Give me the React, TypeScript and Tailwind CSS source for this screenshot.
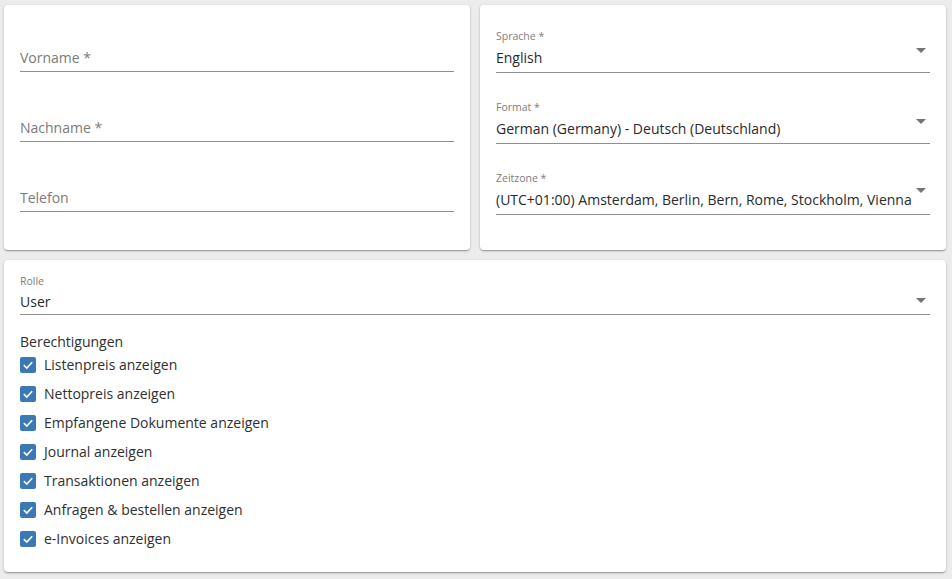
import React from "react";

const font = { fontFamily: '"Open Sans", "Liberation Sans", sans-serif' };

interface FieldProps {
  label?: string;
  value?: string;
  placeholder?: string;
  select?: boolean;
  arrowTop?: number;
  tight?: boolean;
}

const ArrowDown: React.FC<{ top: number }> = ({ top }) => (
  <svg
    className="absolute right-[-3px] w-6 h-6 text-[#757575]"
    style={{ top }}
    viewBox="0 0 24 24"
    fill="currentColor"
  >
    <path d="M7 10l5 5 5-5z" />
  </svg>
);

const Field: React.FC<FieldProps> = ({ label, value, placeholder, select, arrowTop = 10, tight }) => (
  <div className="relative">
    <div className="h-4 text-[10.5px] leading-4 text-[#7d7d7d]">{label}</div>
    <div
      className={
        "border-b border-[#8f8f8f] pt-[4px] pr-4 text-sm leading-5 whitespace-nowrap overflow-hidden " +
        (tight ? "pb-[3px]" : "pb-[4px]")
      }
    >
      {value ? (
        <span className="text-[#2a2a2a]">{value}</span>
      ) : (
        <span className="text-[#7a7a7a]">{placeholder}</span>
      )}
    </div>
    {select && <ArrowDown top={arrowTop} />}
  </div>
);

const Check: React.FC<{ label: string }> = ({ label }) => (
  <div className="h-[29px] flex items-center gap-2">
    <span className="w-4 h-4 rounded-[2px] bg-[#3b78b6] flex items-center justify-center">
      <svg viewBox="0 0 16 16" className="w-4 h-4">
        <polyline points="3.8,8.2 6.8,11 12.2,5.2" fill="none" stroke="#fff" strokeWidth="1.6" />
      </svg>
    </span>
    <span className="text-sm leading-5 text-[#2f2f2f]">{label}</span>
  </div>
);

const permissions = [
  "Listenpreis anzeigen",
  "Nettopreis anzeigen",
  "Empfangene Dokumente anzeigen",
  "Journal anzeigen",
  "Transaktionen anzeigen",
  "Anfragen & bestellen anzeigen",
  "e-Invoices anzeigen",
];

const card = "bg-white rounded-[4px] shadow-[0_1px_3px_rgba(0,0,0,0.2),0_1px_1px_rgba(0,0,0,0.14),0_2px_1px_-1px_rgba(0,0,0,0.12)]";

export default function App() {
  return (
    <div className="w-[952px] h-[579px] bg-[#ececec] pl-[4px] pr-[6px] pt-[5px] overflow-hidden" style={font}>
      <div className="grid grid-cols-2 gap-[10px]">
        {/* personal data */}
        <div className={card + " h-[245px] px-4 pt-[23px] flex flex-col gap-[26px]"}>
          <Field placeholder="Vorname *" tight />
          <Field placeholder="Nachname *" tight />
          <Field placeholder="Telefon" tight />
        </div>

        {/* locale settings */}
        <div className={card + " h-[245px] px-4 pt-[23px] flex flex-col gap-[26px]"}>
          <Field label="Sprache *" value="English" select />
          <Field label="Format *" value="German (Germany) - Deutsch (Deutschland)" select />
          <Field
            label="Zeitzone *"
            value="(UTC+01:00) Amsterdam, Berlin, Bern, Rome, Stockholm, Vienna"
            select
            arrowTop={8}
          />
        </div>
      </div>

      {/* role & permissions */}
      <div className={card + " mt-[10px] h-[312px] px-4 pt-[13px]"}>
        <div className="relative">
          <div className="h-4 text-[10.5px] leading-4 text-[#7d7d7d]">Rolle</div>
          <div className="border-b border-[#8f8f8f] pt-[3px] pb-[2px] text-sm leading-5 text-[#2a2a2a]">User</div>
          <ArrowDown top={15} />
        </div>
        <div className="mt-[17px] text-sm leading-5 text-[#2f2f2f]">Berechtigungen</div>
        <div className="flex flex-col -mt-[2px]">
          {permissions.map((p) => (
            <Check key={p} label={p} />
          ))}
        </div>
      </div>
    </div>
  );
}
